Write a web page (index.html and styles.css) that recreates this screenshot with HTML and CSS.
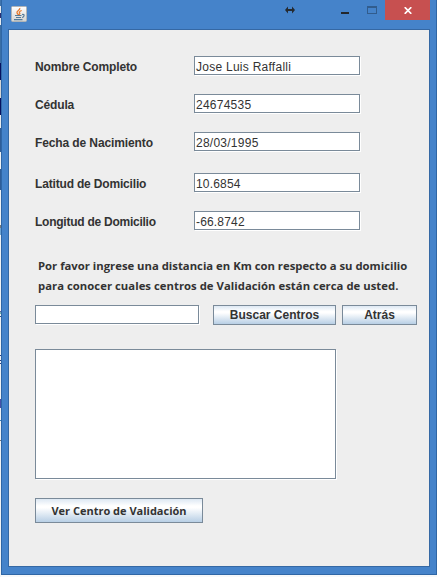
FILE: index.html
```html
<!DOCTYPE html>
<html lang="es">
<head>
<meta charset="utf-8">
<title>Centros de Validación</title>
<link rel="stylesheet" href="styles.css">
</head>
<body>
<div class="desktop">
<main class="window">
  <header class="titlebar">
    <svg class="java" width="16" height="16" viewBox="0 0 16 16">
      <defs><linearGradient id="g" x2="0" y2="1"><stop stop-color="#fff"/><stop offset="1" stop-color="#d4d4d2"/></linearGradient></defs>
      <rect x=".5" y=".5" width="15" height="15" rx="1" fill="url(#g)" stroke="#b1b5b8"/>
      <path d="M8.8 2C9.5 4 5 5 6 7l1.5 2M10.7 4.5C8 5.5 8 6.5 8.8 7.5L8 9" fill="none" stroke="#e77a2e" stroke-width="1.3"/>
      <path d="M4 9.5h6.5M5 11.5h5M3 13.7h8.5M11 8.5c3-1 2.5 2.5 0 3" fill="none" stroke="#557b98" stroke-width="1.2"/>
    </svg>
    <svg class="resize" width="10" height="8" viewBox="0 0 10 8"><path d="M0 4L3 .5v2.5h4V.5l3 3.5-3 3.5V5H3v2.5z" fill="#252a30"/></svg>
    <span class="minimize"></span>
    <span class="maximize"></span>
    <span class="close"><svg width="8" height="7" viewBox="0 0 8 7"><path d="M.7.2L7.3 6.8M7.3.2L.7 6.8" stroke="#fff" stroke-width="1.7"/></svg></span>
  </header>
  <section class="content">
    <div class="row"><label class="w1">Nombre Completo</label><div class="field v1">Jose Luis Raffalli</div></div>
    <div class="row"><label class="w2">Cédula</label><div class="field v2">24674535</div></div>
    <div class="row gap"><label class="w3">Fecha de Nacimiento</label><div class="field v2">28/03/1995</div></div>
    <div class="row"><label class="w4">Latitud de Domicilio</label><div class="field v3">10.6854</div></div>
    <div class="row"><label class="w5">Longitud de Domicilio</label><div class="field v3">-66.8742</div></div>
    <p class="hint"><span class="h1">Por favor ingrese una distancia en Km con respecto a su domicilio</span><br><span class="h2">para conocer cuales centros de Validación están cerca de usted.</span></p>
    <div class="search">
      <div class="field distance"></div>
      <button class="find">Buscar Centros</button>
      <button class="back">Atrás</button>
    </div>
    <div class="field list"></div>
    <button class="view">Ver Centro de Validación</button>
  </section>
</main>
</div>
</body>
</html>
```
FILE: styles.css
```css
* { box-sizing: border-box; }
body { margin: 0; background: #f6f8fa; overflow: hidden; }
.desktop {
  width: 437px; height: 577px; padding: 0 0 2px 1px;
  background: linear-gradient(#3f74ad 0 6px, #e7ebee 6px 13px, #2a2f75 13px 18px, #e7ebee 18px 25px, #3a6ea5 25px 63px, #06105f 63px 80px, #d5d5d5 80px 98px, #06105f 98px 115px, #e7ebee 115px 128px, #2f5d98 128px 152px, #f0f2f4 152px 169px, #2f5d98 169px 190px, #f0f2f4 190px 225px, #777 225px 228px, #6fa5d4 228px 235px, #f0f2f4 235px 311px, #6460a0 311px 312px, #79b4b0 312px 314px, #f0f2f4 314px 316px, #2b4f86 316px 317px, #f0f2f4 317px 355px, #283c84 355px 356px, #f0f2f4 356px 360px, #283c84 360px 361px, #f0f2f4 361px 363px, #283c84 363px 364px, #f0f2f4 364px 399px, #4550a8 399px 408px, #f0f2f4 408px 420px, #3a82b8 420px 421px, #f0f2f4 421px 440px, #777 440px 441px, #f0f2f4 441px) 0 0 / 1px 577px no-repeat;
}
.window { width: 436px; height: 575px; padding: 0 6px 7px; border: solid #2f66a5; border-width: 0 1px 1px; background: #4583ca; display: flex; flex-direction: column; }
.titlebar { height: 29px; flex: none; display: flex; align-items: flex-start; margin-right: -1px; }
.java { margin: 6px 0 0 3px; }
.resize { margin: 6px 0 0 258px; }
.minimize { width: 8px; height: 2px; margin: 12px 0 0 46px; background: #23272c; }
.maximize { width: 10px; height: 8px; margin: 6px 0 0 18px; border: 1px solid #315c8d; border-top-width: 2px; }
.close { width: 45px; height: 20px; margin-left: 8px; background: #c75050; display: flex; justify-content: center; align-items: center; }
.close svg { margin-top: 1px; }
.content { height: 539px; width: 422px; border: 1px solid #3568a4; background: #eee; padding: 26px 11px 0 26px; font: 12px/19px "Liberation Sans", Arial, sans-serif; color: #333; }
.row { display: flex; height: 19px; margin-bottom: 19px; }
.row.gap { margin-bottom: 22px; }
.row label { width: 159px; font-weight: bold; padding-top: 2px; white-space: nowrap; }
.w1 { letter-spacing: -.13px; }
.w2 { letter-spacing: -.15px; }
.w3 { letter-spacing: -.11px; }
.w4 { letter-spacing: -.17px; }
.w5 { letter-spacing: -.25px; }
.field { width: 166px; height: 19px; border: 1px solid #7a8a99; background: #fff; box-shadow: 1px 1px #fff; padding: 1px 0 0 1px; font-size: 12px; white-space: nowrap; }
.v1 { letter-spacing: .26px; }
.v2 { letter-spacing: .25px; }
.v3 { letter-spacing: .17px; }
.hint { margin: 26px 0 9px 3px; font: bold 11.3px/20px "Open Sans", "Noto Sans", sans-serif; white-space: nowrap; }
.h2 { letter-spacing: .03px; }
.search { display: flex; height: 20px; }
.distance { width: 164px; margin-right: 14px; }
button { margin: 0; padding: 0; border: 1px solid #7a8a99; border-radius: 0; color: #333; font: bold 12px/18px "Liberation Sans", Arial, sans-serif; background: linear-gradient(#dde8f3, #fff 30%, #fff 38%, #b8cfe5); white-space: nowrap; }
.find { width: 123px; margin-right: 6px; }
.back { width: 75px; }
.list { width: 301px; height: 130px; margin: 24px 0 19px; }
.view { width: 168px; height: 25px; display: block; font: bold 11px/23px "Open Sans", "Noto Sans", sans-serif; }
```
